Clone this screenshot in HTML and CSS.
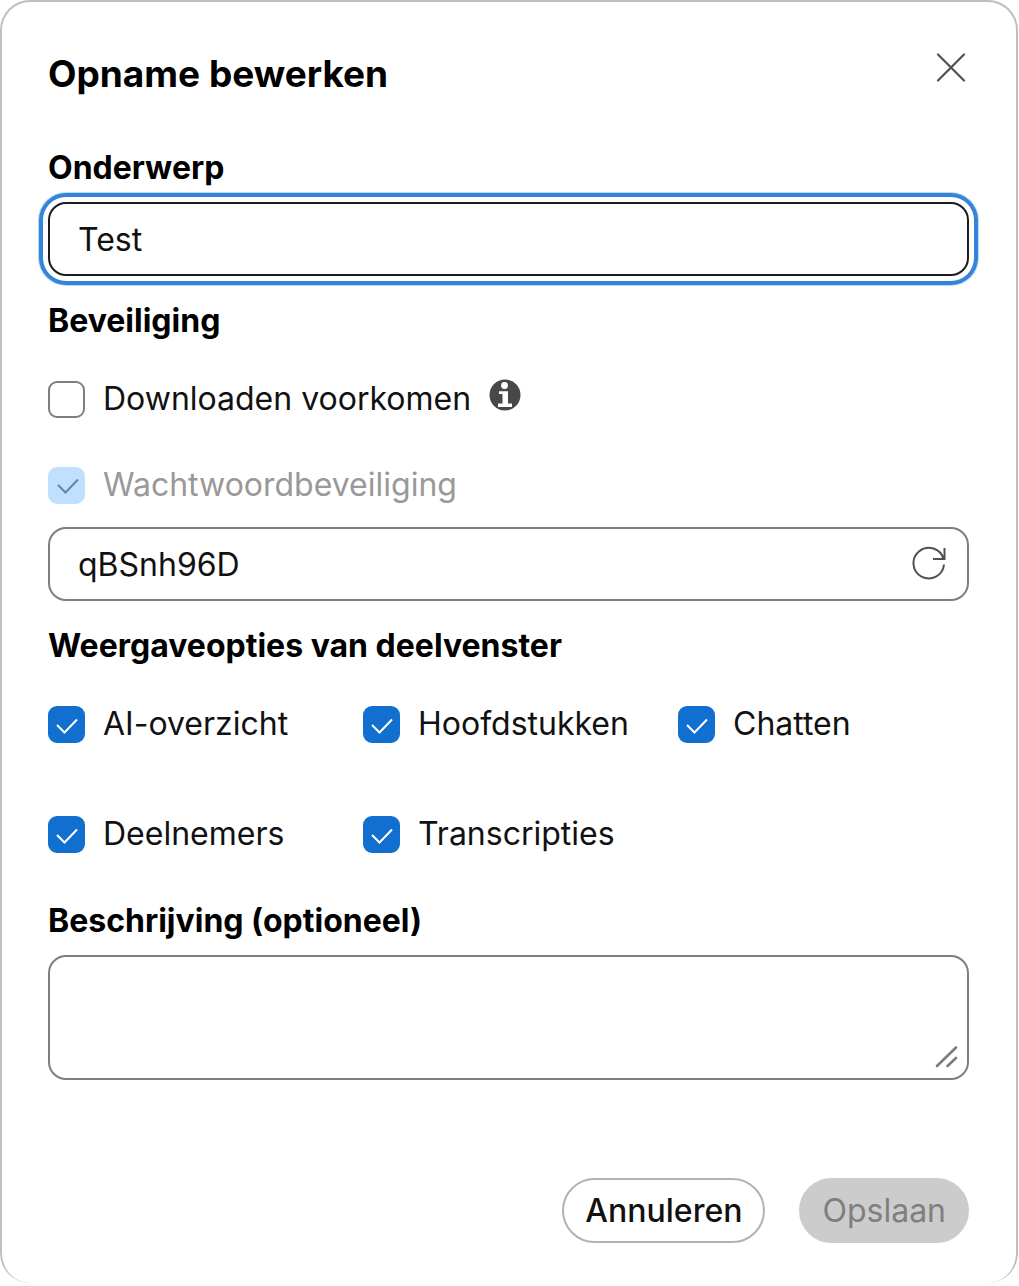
FILE: index.html
```html
<!DOCTYPE html>
<html lang="nl">
<head>
    <meta charset="UTF-8">
    <meta name="viewport" content="width=device-width, initial-scale=1">
    <title>Opname bewerken</title>
    <link rel="stylesheet" href="styles.css">
</head>
<body>
    <form class="dialog">
        <header class="dialog-header">
            <h1>Opname bewerken</h1>
            <button type="button" class="icon-button close" aria-label="Sluiten">
                <svg width="32" height="32" viewBox="0 0 32 32">
                    <path d="M3 2.5L29 28.5M29 2.5L3 28.5" fill="none" stroke="#4f4f4f" stroke-width="2.2" stroke-linecap="round"/>
                </svg>
            </button>
        </header>

        <label class="field-title" for="onderwerp">Onderwerp</label>
        <input type="text" class="field focused" id="onderwerp" value="Test">

        <h2 class="section-title">Beveiliging</h2>
        <div class="option-row">
            <label class="option"><input type="checkbox">Downloaden voorkomen</label>
            <button type="button" class="icon-button info" aria-label="Meer informatie">
                <svg width="32" height="32" viewBox="0 0 32 32">
                    <circle cx="16" cy="16" r="15.5" fill="#484848"/>
                    <circle cx="15.5" cy="6.5" r="3.4" fill="#fff"/>
                    <path d="M10 12.3H19V24.5H23V28H9V24.5H13.5V15H10Z" fill="#fff"/>
                </svg>
            </button>
        </div>
        <div class="option-row password-row">
            <label class="option disabled"><input type="checkbox" checked disabled>Wachtwoordbeveiliging</label>
        </div>
        <div class="password-field">
            <input type="text" class="field" id="wachtwoord" value="qBSnh96D" aria-label="Wachtwoord">
            <button type="button" class="icon-button refresh" aria-label="Nieuw wachtwoord">
                <svg width="36" height="36" viewBox="0 0 36 36">
                    <path d="M33 18.5A15.3 15.3 0 1 1 32.5 13M33.5 2V13H22" fill="none" stroke="#4f4f4f" stroke-width="2"/>
                </svg>
            </button>
        </div>

        <h2 class="section-title">Weergaveopties van deelvenster</h2>
        <div class="panel-options">
            <label class="option"><input type="checkbox" checked>AI-overzicht</label>
            <label class="option"><input type="checkbox" checked>Hoofdstukken</label>
            <label class="option"><input type="checkbox" checked>Chatten</label>
            <label class="option"><input type="checkbox" checked>Deelnemers</label>
            <label class="option"><input type="checkbox" checked>Transcripties</label>
        </div>

        <label class="field-title" for="beschrijving">Beschrijving (optioneel)</label>
        <div class="description">
            <textarea class="field" id="beschrijving"></textarea>
            <svg class="grip" width="24" height="24" viewBox="0 0 24 24">
                <path d="M3 21L22 2.5M13.5 21L22 13" fill="none" stroke="#7d7d7d" stroke-width="2.6" stroke-linecap="round"/>
            </svg>
        </div>

        <footer class="actions">
            <button type="button" class="button cancel">Annuleren</button>
            <button type="submit" class="button save" disabled>Opslaan</button>
        </footer>
    </form>
</body>
</html>
```

FILE: styles.css
```css
* {
    box-sizing: border-box;
}
body {
    margin: 0;
    background-color: #fff;
    color: #111;
    font-family: Inter, "Liberation Sans", sans-serif;
    font-size: 32px;
    line-height: 44px;
}
input, textarea, button {
    font: inherit;
    color: inherit;
}
.dialog {
    margin-right: 1px;
    padding: 48px 47px 40px 46px;
    border: 2px solid #bfbfbf;
    border-bottom: none;
    border-radius: 30px;
    background-color: #fff;
}
.dialog-header {
    display: flex;
    justify-content: space-between;
    margin-bottom: 48px;
}
h1 {
    margin: 0;
    font-size: 37px;
    font-weight: 700;
    line-height: 48px;
    color: #000;
}
.icon-button {
    display: flex;
    align-items: center;
    justify-content: center;
    padding: 0;
    border: none;
    background: none;
    cursor: pointer;
}
.close {
    width: 36px;
    height: 36px;
}
.field-title, .section-title {
    display: block;
    margin: 0;
    font-size: 32px;
    font-weight: 700;
    color: #000;
}
.field-title {
    margin-bottom: 12px;
}
.section-title {
    margin: 23px 0 34px;
}
.field {
    display: block;
    width: 100%;
    height: 74px;
    padding: 0 28px;
    border: 2px solid #7f7f7f;
    border-radius: 18px;
    background-color: #fff;
    outline: none;
}
.focused {
    border-color: #1c1c1c;
    box-shadow: 0 0 0 5px #fff, 0 0 0 9px #3584d8, 0 0 0 10px #b9dcf8;
}
.option-row {
    display: flex;
    gap: 18px;
}
.option {
    display: flex;
    align-items: center;
    gap: 18px;
}
.option input {
    appearance: none;
    flex: none;
    width: 37px;
    height: 37px;
    margin: 0;
    border: 2px solid #7f7f7f;
    border-radius: 9px;
    background: #fff center / 37px 37px no-repeat;
}
.option input:checked {
    border-color: #1170cf;
    background-color: #1170cf;
    background-image: url("data:image/svg+xml,%3Csvg xmlns='http://www.w3.org/2000/svg' viewBox='0 0 37 37'%3E%3Cpath d='M9 19L16.5 26.5L29 13.5' fill='none' stroke='%23fff' stroke-width='2'/%3E%3C/svg%3E");
}
.option input:disabled {
    border-color: #bfe1ff;
    background-color: #bfe1ff;
    background-image: url("data:image/svg+xml,%3Csvg xmlns='http://www.w3.org/2000/svg' viewBox='0 0 37 37'%3E%3Cpath d='M10 18L17.5 25.5L30 12.5' fill='none' stroke='%236f8496' stroke-width='2'/%3E%3C/svg%3E");
}
.disabled {
    color: #999;
}
.info {
    height: 36px;
}
.password-row {
    margin: 42px 0 20px;
}
.password-field, .description {
    position: relative;
}
.password-field .field {
    padding-right: 72px;
}
.refresh {
    position: absolute;
    top: 19px;
    right: 22px;
}
.panel-options {
    display: grid;
    grid-template-columns: repeat(3, 1fr);
    gap: 66px 24px;
    margin-bottom: 43px;
}
.description .field {
    height: 125px;
    padding: 14px 28px;
    resize: none;
}
.grip {
    position: absolute;
    right: 11px;
    bottom: 11px;
    pointer-events: none;
}
.actions {
    display: flex;
    justify-content: flex-end;
    gap: 34px;
    margin-top: 98px;
}
.button {
    height: 65px;
    padding: 0 21px;
    border: 2px solid #b2b2b2;
    border-radius: 33px;
    background-color: #fff;
    cursor: pointer;
}
.cancel {
    font-weight: 500;
}
.save {
    border-color: #ccc;
    background-color: #ccc;
    color: #7f7f7f;
    cursor: default;
}
```
